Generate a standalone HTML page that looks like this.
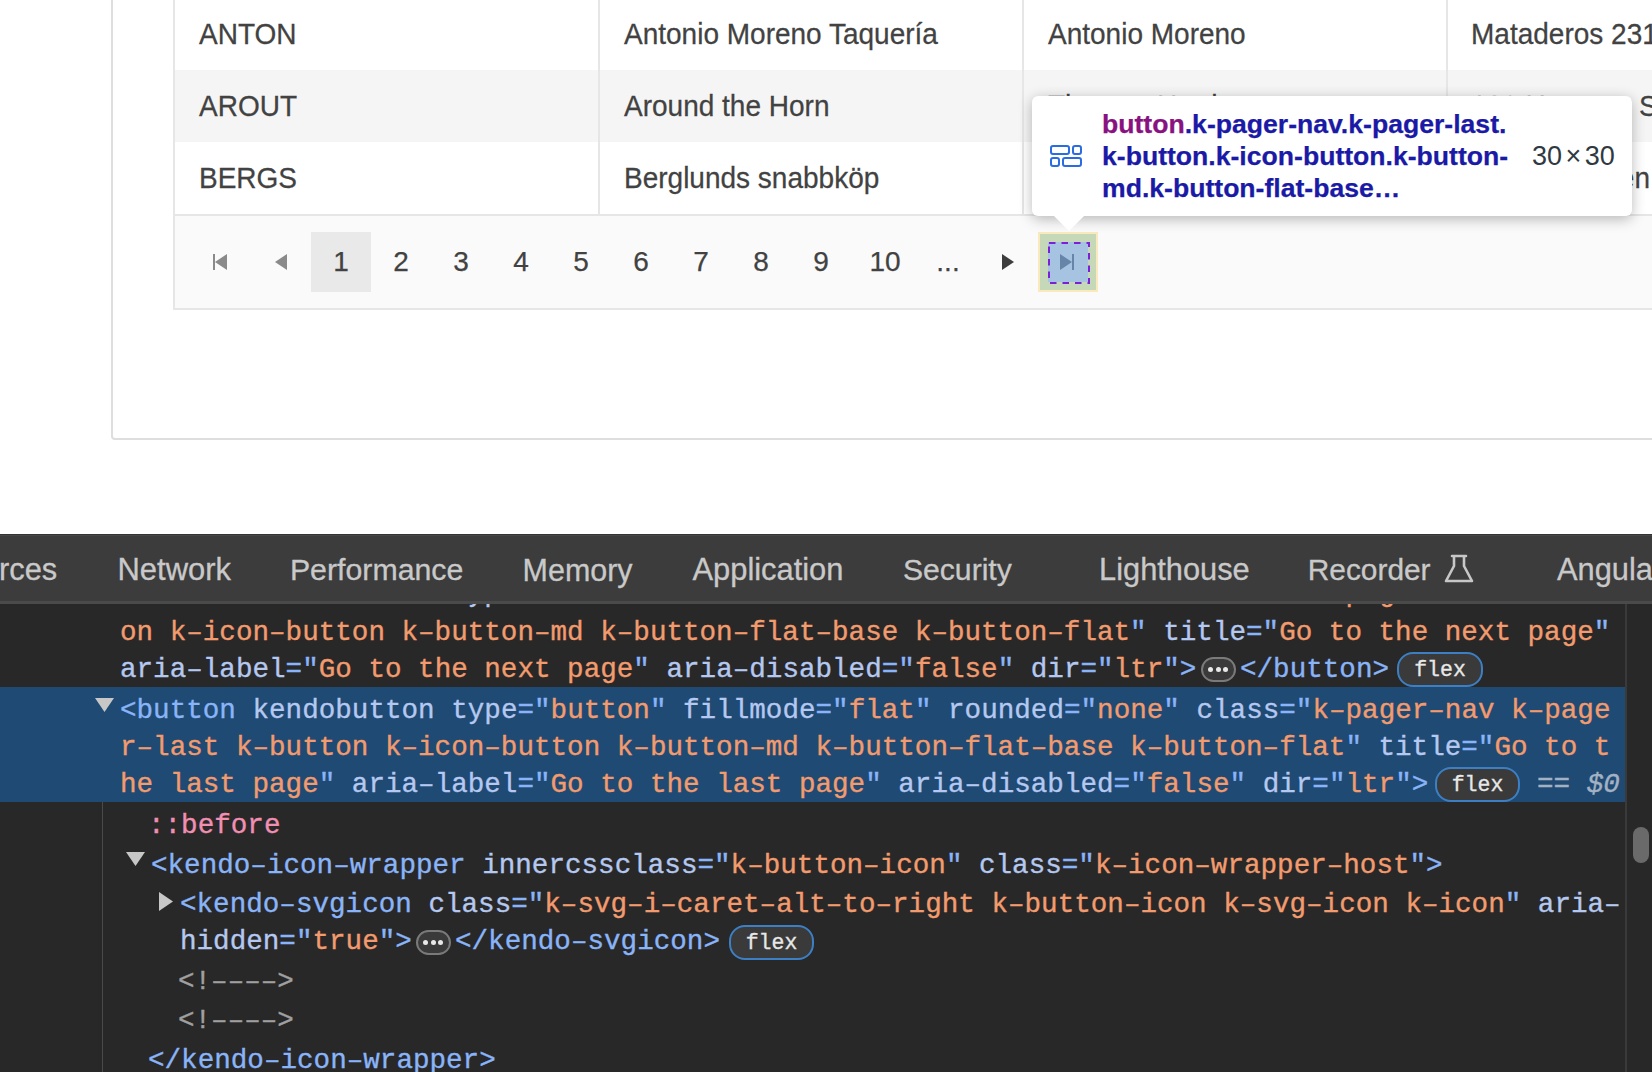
<!DOCTYPE html>
<html><head><meta charset="utf-8">
<style>
html,body{margin:0;padding:0}
body{width:1652px;height:1072px;overflow:hidden;position:relative;background:#fff;font-family:"Liberation Sans",sans-serif}
.a{position:absolute}
.frame{left:111px;top:-20px;width:1700px;height:456px;border:2px solid #dedede;border-radius:4px;box-sizing:content-box}
.grid{left:173px;top:-20px;width:1600px;height:328px;border-left:2px solid #e6e6e6;border-bottom:2px solid #e6e6e6;background:#fff}
.row{left:175px;width:1500px;height:72px}
.alt{background:#f5f5f5}
.vline{width:2px;top:-20px;height:234px;background:#e6e6e6}
.cell{font-size:28px;color:#424242;white-space:nowrap;line-height:32px;transform:scaleY(1.07);transform-origin:0 25.7px;-webkit-text-stroke:0.25px currentColor}
.pager{left:175px;top:214px;width:1500px;height:92px;background:#fafafa;border-top:2px solid #e6e6e6}
.pg{top:232px;width:60px;height:60px;font-size:28px;color:#424242;text-align:center;line-height:60px;-webkit-text-stroke:0.25px currentColor}
.sel{background:#e9e9e9}
/* tooltip */
.tip{left:1032px;top:96px;width:600px;height:120px;background:#fff;border-radius:6px;box-shadow:0 3px 14px rgba(0,0,0,.28)}
.tiptext{left:1102px;top:108px;font-weight:bold;font-size:26.6px;line-height:32px;color:#1a1aa6;white-space:nowrap;-webkit-text-stroke:0.25px currentColor}
.dims{left:1532px;top:140px;font-size:27px;color:#303942;white-space:nowrap;line-height:32px;word-spacing:-4px}
/* devtools */
.dt{left:0;top:534px;width:1652px;height:538px;background:#282828}
.tabs{left:0;top:534px;width:1652px;height:68px;background:#3c3c3c;border-top:1px solid #333;box-shadow:inset 0 1px 0 #464646;box-sizing:border-box}
.tabsb{left:0;top:601px;width:1652px;height:3px;background:#4a4a4a}
.tab{top:553px;font-size:30.8px;color:#c9c9c9;white-space:nowrap;line-height:34px;-webkit-text-stroke:0.3px currentColor}
.code{font-family:"Liberation Mono",monospace;font-size:27.6px;white-space:pre;line-height:37px;color:#c7c7c7;-webkit-text-stroke:0.35px currentColor}
.t{color:#8ab4f8}.n{color:#b5c8f0}.v{color:#f29b6e}.p{color:#f18fb3}.c{color:#a0a0a0}
.selrow{left:0;top:687px;width:1625px;height:115px;background:#1f4a73}
.gutter{left:1625px;top:604px;width:27px;height:468px;background:#282828;border-left:2px solid #3a3a3a;box-sizing:border-box}
.thumb{left:1633px;top:827px;width:16px;height:36px;border-radius:8px;background:#6a6a6a}
.badge{height:35px;border:2px solid #3d7fc4;border-radius:16px;background:#3a3a3a;box-sizing:border-box;font-family:"Liberation Mono",monospace;font-size:21.5px;color:#e8e8e8;text-align:center;line-height:32px;-webkit-text-stroke:0.3px currentColor}
.ell{width:35px;height:25px;border:2px solid #7a7a7a;border-radius:12.5px;background:#3a3a3a;box-sizing:border-box}
.ell i{position:absolute;top:7.9px;width:5.2px;height:5.2px;border-radius:3px;background:#e8e8e8}
.guide{left:102px;top:802px;width:1px;height:270px;background:#4a4a4a}
</style></head><body>
<!-- page -->
<div class="a frame"></div>
<div class="a grid"></div>
<div class="a row" style="top:-2px"></div>
<div class="a row alt" style="top:70px"></div>
<div class="a row" style="top:142px"></div>
<div class="a vline" style="left:598px"></div>
<div class="a vline" style="left:1022px"></div>
<div class="a vline" style="left:1446px"></div>

<div class="a cell" style="left:199px;top:19px">ANTON</div>
<div class="a cell" style="left:624px;top:19px">Antonio Moreno Taquería</div>
<div class="a cell" style="left:1048px;top:19px">Antonio Moreno</div>
<div class="a cell" style="left:1471px;top:19px">Mataderos 2312</div>
<div class="a cell" style="left:199px;top:91px">AROUT</div>
<div class="a cell" style="left:624px;top:91px">Around the Horn</div>
<div class="a cell" style="left:1048px;top:91px">Thomas Hardy</div>
<div class="a cell" style="left:1471px;top:91px">120 Hanover Sq.</div>
<div class="a cell" style="left:199px;top:163px">BERGS</div>
<div class="a cell" style="left:624px;top:163px">Berglunds snabbköp</div>
<div class="a cell" style="left:1048px;top:163px">Christina Berglund</div>
<div class="a cell" style="left:1471px;top:163px">Berguvsvägen 8</div>

<div class="a pager"></div>
<svg class="a" style="left:200px;top:232px" width="40" height="60" viewBox="0 0 40 60"><rect x="13" y="22" width="2" height="16" fill="#8a8a8a"/><path d="M15 30 L27 22 L27 38 Z" fill="#8a8a8a"/></svg>
<svg class="a" style="left:260px;top:232px" width="40" height="60" viewBox="0 0 40 60"><path d="M15 30 L27 22 L27 38 Z" fill="#8a8a8a"/></svg>
<div class="a pg sel" style="left:311px">1</div>
<div class="a pg" style="left:371px">2</div>
<div class="a pg" style="left:431px">3</div>
<div class="a pg" style="left:491px">4</div>
<div class="a pg" style="left:551px">5</div>
<div class="a pg" style="left:611px">6</div>
<div class="a pg" style="left:671px">7</div>
<div class="a pg" style="left:731px">8</div>
<div class="a pg" style="left:791px">9</div>
<div class="a pg" style="left:852px;width:66px">10</div>
<div class="a pg" style="left:918px">...</div>
<svg class="a" style="left:988px;top:232px" width="40" height="60" viewBox="0 0 40 60"><path d="M14 22 L26 30 L14 38 Z" fill="#3d3d3d"/></svg>
<!-- highlight -->
<div class="a" style="left:1038px;top:232px;width:60px;height:60px;background:#f9e9bd"></div>
<div class="a" style="left:1040px;top:234px;width:56px;height:56px;background:#c5d9b8"></div>
<div class="a" style="left:1048px;top:242px;width:40px;height:40px;background:#a6c3e2"></div>
<svg class="a" style="left:1047px;top:241px" width="46" height="46" viewBox="0 0 46 46"><rect x="2" y="2" width="40" height="40" fill="none" stroke="#7b1fd8" stroke-width="2" stroke-dasharray="6.5 6"/><path d="M13 13 L25 21 L13 29 Z" fill="#6685a8"/><rect x="25" y="13" width="2" height="16" fill="#6685a8"/></svg>

<!-- tooltip -->
<div class="a tip"></div>
<svg class="a" style="left:1050px;top:214px;overflow:visible" width="40" height="20" viewBox="0 0 40 20"><path d="M4 2 L19 17 L34 2 Z" fill="#fff"/></svg>
<svg class="a" style="left:1049px;top:144px" width="34" height="24" viewBox="0 0 34 24"><g fill="none" stroke="#2b6ce0" stroke-width="2"><rect x="2" y="2" width="18" height="8" rx="2"/><rect x="24" y="2" width="8" height="8" rx="2"/><rect x="2" y="14" width="8" height="8" rx="2"/><rect x="14" y="14" width="18" height="8" rx="2"/></g></svg>
<div class="a tiptext"><span style="color:#881280">button</span>.k-pager-nav.k-pager-last.<br>k-button.k-icon-button.k-button-<br>md.k-button-flat-base…</div>
<div class="a dims">30 × 30</div>

<!-- devtools -->
<div class="a dt"></div>

<div class="a selrow"></div>
<div class="a guide"></div>
<div class="a gutter"></div>
<div class="a thumb"></div>
<div class="a code" style="left:120px;top:575px"><span class="t">&lt;button</span> <span class="n">kendobutton</span> <span class="n">type</span><span class="t">="</span><span class="v">button</span><span class="t">"</span> <span class="n">fillmode</span><span class="t">="</span><span class="v">flat</span><span class="t">"</span> <span class="n">rounded</span><span class="t">="</span><span class="v">none</span><span class="t">"</span> <span class="n">class</span><span class="t">="</span><span class="v">k&#8211;pager&#8211;nav k&#8211;butt</span></div>
<div class="a code" style="left:120px;top:614px"><span class="v">on k&#8211;icon&#8211;button k&#8211;button&#8211;md k&#8211;button&#8211;flat&#8211;base k&#8211;button&#8211;flat</span><span class="t">"</span> <span class="n">title</span><span class="t">="</span><span class="v">Go to the next page</span><span class="t">"</span></div>
<div class="a code" style="left:120px;top:651px"><span class="n">aria&#8211;label</span><span class="t">="</span><span class="v">Go to the next page</span><span class="t">"</span> <span class="n">aria&#8211;disabled</span><span class="t">="</span><span class="v">false</span><span class="t">"</span> <span class="n">dir</span><span class="t">="</span><span class="v">ltr</span><span class="t">"&gt;</span></div>
<div class="a ell" style="left:1201px;top:657px"><i style="left:5px"></i><i style="left:12.8px"></i><i style="left:19.9px"></i></div>
<div class="a code" style="left:1240px;top:651px"><span class="t">&lt;/button&gt;</span></div>
<div class="a badge" style="left:1397px;top:652px;width:86px">flex</div>
<svg class="a" style="left:90px;top:692px" width="30" height="24" viewBox="0 0 30 24"><path d="M5 6 H24 L14.5 20 Z" fill="#c7c7c7"/></svg>
<div class="a code" style="left:120px;top:692px"><span class="t">&lt;button</span> <span class="n">kendobutton</span> <span class="n">type</span><span class="t">="</span><span class="v">button</span><span class="t">"</span> <span class="n">fillmode</span><span class="t">="</span><span class="v">flat</span><span class="t">"</span> <span class="n">rounded</span><span class="t">="</span><span class="v">none</span><span class="t">"</span> <span class="n">class</span><span class="t">="</span><span class="v">k&#8211;pager&#8211;nav k&#8211;page</span></div>
<div class="a code" style="left:120px;top:729px"><span class="v">r&#8211;last k&#8211;button k&#8211;icon&#8211;button k&#8211;button&#8211;md k&#8211;button&#8211;flat&#8211;base k&#8211;button&#8211;flat</span><span class="t">"</span> <span class="n">title</span><span class="t">="</span><span class="v">Go to t</span></div>
<div class="a code" style="left:120px;top:766px"><span class="v">he last page</span><span class="t">"</span> <span class="n">aria&#8211;label</span><span class="t">="</span><span class="v">Go to the last page</span><span class="t">"</span> <span class="n">aria&#8211;disabled</span><span class="t">="</span><span class="v">false</span><span class="t">"</span> <span class="n">dir</span><span class="t">="</span><span class="v">ltr</span><span class="t">"&gt;</span></div>
<div class="a badge" style="left:1435px;top:767px;width:85px">flex</div>
<div class="a code" style="left:1537px;top:766px;color:#a3b1c4">== <i>$0</i></div>
<div class="a code p" style="left:148px;top:807px">::before</div>
<svg class="a" style="left:121px;top:846px" width="30" height="24" viewBox="0 0 30 24"><path d="M5 6 H24 L14.5 20 Z" fill="#c7c7c7"/></svg>
<div class="a code" style="left:151px;top:847px"><span class="t">&lt;kendo&#8211;icon&#8211;wrapper</span> <span class="n">innercssclass</span><span class="t">="</span><span class="v">k&#8211;button&#8211;icon</span><span class="t">"</span> <span class="n">class</span><span class="t">="</span><span class="v">k&#8211;icon&#8211;wrapper&#8211;host</span><span class="t">"&gt;</span></div>
<svg class="a" style="left:154px;top:888px" width="24" height="28" viewBox="0 0 24 28"><path d="M5 4 L19 13.5 L5 23 Z" fill="#c7c7c7"/></svg>
<div class="a code" style="left:180px;top:886px"><span class="t">&lt;kendo&#8211;svgicon</span> <span class="n">class</span><span class="t">="</span><span class="v">k&#8211;svg&#8211;i&#8211;caret&#8211;alt&#8211;to&#8211;right k&#8211;button&#8211;icon k&#8211;svg&#8211;icon k&#8211;icon</span><span class="t">"</span> <span class="n">aria&#8211;</span></div>
<div class="a code" style="left:180px;top:923px"><span class="n">hidden</span><span class="t">="</span><span class="v">true</span><span class="t">"&gt;</span></div>
<div class="a ell" style="left:416px;top:930px"><i style="left:5px"></i><i style="left:12.8px"></i><i style="left:19.9px"></i></div>
<div class="a code" style="left:455px;top:923px"><span class="t">&lt;/kendo&#8211;svgicon&gt;</span></div>
<div class="a badge" style="left:729px;top:925px;width:85px">flex</div>
<div class="a code c" style="left:178px;top:963px">&lt;!&#8211;&#8211;&#8211;&#8211;&gt;</div>
<div class="a code c" style="left:178px;top:1002px">&lt;!&#8211;&#8211;&#8211;&#8211;&gt;</div>
<div class="a code" style="left:148px;top:1042px"><span class="t">&lt;/kendo&#8211;icon&#8211;wrapper&gt;</span></div>

<div class="a tabs"></div>
<div class="a tabsb"></div>
<div class="a tab" style="left:-1px">rces</div>
<div class="a tab" style="left:117.5px;font-size:30.94px">Network</div>
<div class="a tab" style="left:289.9px;font-size:30.3px">Performance</div>
<div class="a tab" style="left:522.6px;font-size:30.45px">Memory</div>
<div class="a tab" style="left:692.5px;font-size:30.85px">Application</div>
<div class="a tab" style="left:902.9px;font-size:30.17px">Security</div>
<div class="a tab" style="left:1099.1px;font-size:30.79px">Lighthouse</div>
<div class="a tab" style="left:1307.7px;font-size:29.88px">Recorder</div>
<svg class="a" style="left:1442px;top:553px" width="34" height="32" viewBox="0 0 34 32"><path d="M10 3 H24 M12 3 V13 L4 28 H30 L22 13 V3" fill="none" stroke="#c7c7c7" stroke-width="2.6" stroke-linejoin="round" stroke-linecap="round"/></svg>
<div class="a tab" style="left:1557px">Angular</div>
</body></html>
